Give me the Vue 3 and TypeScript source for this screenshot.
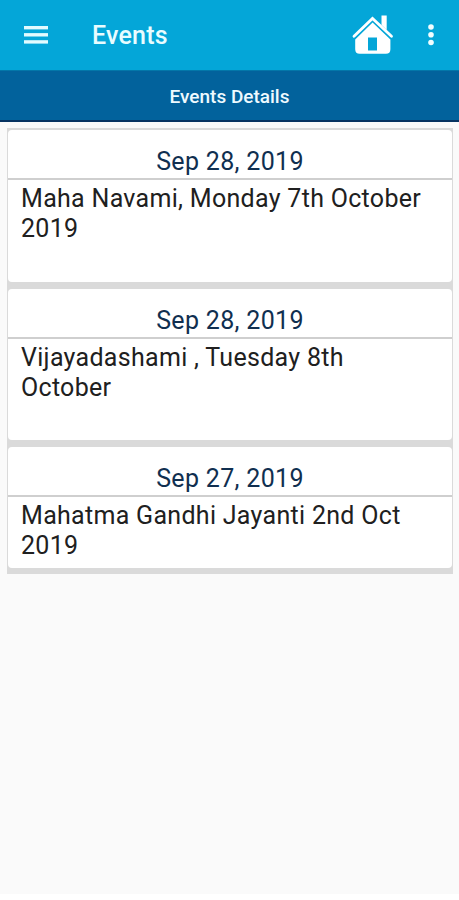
<script setup lang="ts">
interface EventItem {
  date: string
  title: string
  compact?: boolean
}

const events: EventItem[] = [
  { date: 'Sep 28, 2019', title: 'Maha Navami, Monday 7th October 2019' },
  { date: 'Sep 28, 2019', title: 'Vijayadashami , Tuesday 8th October' },
  { date: 'Sep 27, 2019', title: 'Mahatma Gandhi Jayanti 2nd Oct 2019', compact: true },
]
</script>

<template>
  <div class="screen">
    <header class="toolbar">
      <button class="icon-button menu" aria-label="Menu">
        <svg width="24" height="18" viewBox="0 0 24 18" fill="#e2fbff">
          <rect width="24" height="3.4" y="0" />
          <rect width="24" height="3.4" y="7.1" />
          <rect width="24" height="3.4" y="14.2" />
        </svg>
      </button>
      <h1 class="title">Events</h1>
      <button class="icon-button home" aria-label="Home">
        <svg width="42" height="40" viewBox="0 0 42 40">
          <path d="M29.5.6h5.2V15l-5.2-5z" fill="#fff" />
          <path d="M2 21.2 20.5 3.4 39.5 21.2" fill="none" stroke="#fff" stroke-width="2.8" stroke-linecap="round" stroke-linejoin="miter" />
          <path fill-rule="evenodd" d="M20.6 7.4 38.4 24.4v9.8q0 4.5-4.5 4.5H7.7q-4.5 0-4.5-4.5v-9.8zM16 22.6v13h9V22.6z" fill="#fff" />
        </svg>
      </button>
      <button class="icon-button more" aria-label="More options">
        <svg width="6" height="22" viewBox="0 0 6 22" fill="#f1fdff">
          <circle cx="3" cy="3" r="2.8" />
          <circle cx="3" cy="10.8" r="2.8" />
          <circle cx="3" cy="18.5" r="2.8" />
        </svg>
      </button>
    </header>
    <div class="subheader">Events Details</div>
    <main class="content">
      <div class="list">
        <article v-for="(event, index) in events" :key="index" class="card" :class="{ compact: event.compact }">
          <div class="date">{{ event.date }}</div>
          <p class="description">{{ event.title }}</p>
        </article>
      </div>
    </main>
  </div>
</template>

<style>
body {
  background: #fff;
}
</style>

<style scoped>
.screen {
  display: flex;
  flex-direction: column;
  height: 894px;
  background: #fafafa;
  font-family: Roboto, sans-serif;
}
.toolbar {
  display: flex;
  align-items: center;
  box-sizing: border-box;
  height: 70px;
  padding: 0 25px 0 24px;
  background: #04a6d8;
}
.icon-button {
  display: flex;
  padding: 0;
  border: 0;
  background: none;
}
.title {
  flex: 1;
  margin: 1px 0 0 44px;
  color: #e9fcff;
  font-size: 25px;
  font-weight: 500;
  letter-spacing: 0.2px;
  line-height: 30px;
}
.home {
  margin-right: 34px;
}
.subheader {
  box-sizing: border-box;
  height: 52px;
  border-top: 1px solid #0377a9;
  border-bottom: 2px solid #073361;
  background: #02629c;
  color: #eefaff;
  font-size: 19px;
  font-weight: 500;
  line-height: 51px;
  text-align: center;
}
.content {
  flex: 1;
  padding: 6px 6px 0 7px;
}
.list {
  display: flex;
  flex-direction: column;
  gap: 7px;
  padding: 2px 1px 6px;
  background: #dadada;
}
.card {
  box-sizing: border-box;
  height: 151.5px;
  border-radius: 4px;
  background: #fff;
}
.card.compact {
  height: 121px;
}
.date {
  box-sizing: border-box;
  height: 50px;
  padding-top: 17px;
  border-bottom: 2px solid #cfcfcf;
  color: #102f50;
  font-size: 25px;
  letter-spacing: 0.32px;
  line-height: 30px;
  text-align: center;
}
.description {
  margin: 0;
  padding: 4px 18px 0 13px;
  color: #202020;
  font-size: 25px;
  letter-spacing: 0.3px;
  line-height: 30px;
}
</style>
